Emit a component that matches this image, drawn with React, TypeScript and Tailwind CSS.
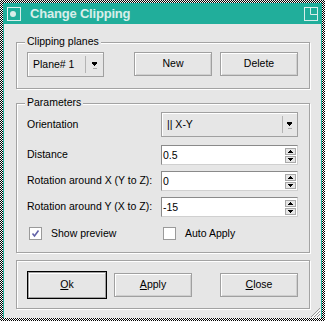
import React from 'react';

const FONT = "font-['Liberation_Sans',Arial,sans-serif]";

function Button({ children }: { children: React.ReactNode }) {
  return (
    <div className="w-[78px] h-[24px] flex items-center justify-center bg-[#e6e6e6] border border-[#a0a0a0] shadow-[inset_1px_1px_0_#ffffff,inset_-1px_-1px_0_#cfcfcf]">
      {children}
    </div>
  );
}

function ComboArrow() {
  return (
    <svg width="6" height="8" viewBox="0 0 6 8" shapeRendering="crispEdges">
      <rect x="0" y="0" width="5" height="2" fill="#000" />
      <rect x="1" y="2" width="3" height="1" fill="#000" />
      <rect x="2" y="3" width="1" height="1" fill="#000" />
      <rect x="0.5" y="6" width="4" height="1" fill="#a8a8a8" />
    </svg>
  );
}

function Combo({ text, width, arrowW }: { text: string; width: string; arrowW: string }) {
  return (
    <div className={`${width} h-[25px] flex bg-[#e6e6e6] border border-[#a0a0a0] shadow-[inset_1px_1px_0_#ffffff]`}>
      <div className="flex-1 flex items-center pl-[5px]">{text}</div>
      <div className="w-px my-[3px] bg-[#b4b4b4]" />
      <div className={`${arrowW} flex items-center justify-center pt-[2px]`}>
        <ComboArrow />
      </div>
    </div>
  );
}

function SpinBtn({ up }: { up?: boolean }) {
  return (
    <div className="w-[11px] h-[7px] flex items-center justify-center bg-[#e6e6e6] border border-[#a8a8a8]">
      <svg width="5" height="3" viewBox="0 0 5 3" shapeRendering="crispEdges">
        {up ? (
          <path d="M2.5 0 L5 3 L0 3 Z" fill="#000" />
        ) : (
          <path d="M0 0 L5 0 L2.5 3 Z" fill="#000" />
        )}
      </svg>
    </div>
  );
}

function Spin({ value }: { value: string }) {
  return (
    <div className="w-[137px] h-[20px] flex items-center bg-white border border-t-[#8a8a8a] border-l-[#8a8a8a] border-r-[#d0d0d0] border-b-[#d0d0d0]">
      <div className="flex-1 pl-[1px] pt-[2px]">{value}</div>
      <div className="flex flex-col gap-px mr-[1px]">
        <SpinBtn up />
        <SpinBtn />
      </div>
    </div>
  );
}

function Group({ label, children, className }: { label?: string; children: React.ReactNode; className: string }) {
  return (
    <div className={`relative border border-[#a3a3a3] shadow-[inset_1px_1px_0_#ffffff,1px_1px_0_#ffffff] ${className}`}>
      {label && (
        <span className="absolute left-[8px] top-[-8px] px-[2px] bg-[#e6e6e6] leading-[13px]">{label}</span>
      )}
      {children}
    </div>
  );
}

function Row({ label, children }: { label: string; children: React.ReactNode }) {
  return (
    <div className="flex items-center">
      <div className="w-[134px]">{label}</div>
      {children}
    </div>
  );
}

function Check({ checked, label }: { checked?: boolean; label: string }) {
  return (
    <div className="flex items-center">
      <div className="w-[13px] h-[13px] bg-white border border-[#9a9a9a] flex items-center justify-center">
        {checked && (
          <svg width="9" height="9" viewBox="0 0 9 9">
            <path d="M1.5 4.5 L3.5 7 L7.5 1.5" stroke="#6262a8" strokeWidth="1.6" fill="none" />
          </svg>
        )}
      </div>
      <span className="ml-[9px]">{label}</span>
    </div>
  );
}

export default function App() {
  return (
    <div className={`${FONT} w-[325px] h-[321px] p-[3px] bg-[repeating-conic-gradient(#000_0_25%,#fff_0_50%)] bg-[length:2px_2px] text-[10.5px] text-black`}>
      <div className="relative w-full h-full flex flex-col border-x border-[#21ae9b] bg-[#e6e6e6]">
        {/* Title bar */}
        <div className="h-[21px] flex items-center bg-[#21ae9b] px-[3px]">
          <svg width="14" height="14" viewBox="0 0 14 14">
            <rect x="0.5" y="0.5" width="13" height="13" fill="none" stroke="#d8eeea" />
            <circle cx="6" cy="7" r="3" fill="#d8eeea" />
          </svg>
          <span className="ml-[9px] text-[13px] font-bold tracking-[-0.2px] text-[#d8eeea] leading-none">Change Clipping</span>
          <div className="flex-1" />
          <svg width="14" height="14" viewBox="0 0 14 14">
            <rect x="0.5" y="0.5" width="13" height="13" fill="none" stroke="#d8eeea" />
            <path d="M6.5 0.5 V7.5 H13.5" fill="none" stroke="#d8eeea" />
          </svg>
        </div>

        {/* Body */}
        <div className="flex flex-col pl-[12px] pr-[11px] pt-[18px]">
          <Group label="Clipping planes" className="pt-[9px] pb-[11px] pl-[10px] pr-[11px]">
            <div className="flex">
              <Combo text="Plane# 1" width="w-[77px]" arrowW="w-[17px]" />
              <div className="ml-[30px]"><Button>New</Button></div>
              <div className="ml-[8px]"><Button>Delete</Button></div>
            </div>
          </Group>

          <Group label="Parameters" className="mt-[14px] pt-[8px] pb-[10px] pl-[10px] pr-[11px]">
            <div className="flex flex-col">
              <Row label="Orientation">
                <Combo text="|| X-Y" width="w-[137px]" arrowW="w-[14px]" />
              </Row>
              <div className="mt-[8px]">
                <Row label="Distance"><Spin value="0.5" /></Row>
              </div>
              <div className="mt-[6px]">
                <Row label="Rotation around X (Y to Z):"><Spin value="0" /></Row>
              </div>
              <div className="mt-[6px]">
                <Row label="Rotation around Y (X to Z):"><Spin value="-15" /></Row>
              </div>
              <div className="mt-[9px] flex pl-[2px]">
                <div className="w-[134px]"><Check checked label="Show preview" /></div>
                <Check label="Auto Apply" />
              </div>
            </div>
          </Group>

          <Group className="mt-[7px] pt-[10px] pb-[9px] pl-[10px] pr-[11px]">
            <div className="flex items-center">
              <div className="w-[80px] h-[28px] border border-black">
                <div className="w-full h-full flex items-center justify-center bg-[#e6e6e6] border border-[#a0a0a0] shadow-[inset_1px_1px_0_#ffffff]">
                  <span><u>O</u>k</span>
                </div>
              </div>
              <div className="ml-[7px]"><Button><span><u>A</u>pply</span></Button></div>
              <div className="ml-[28px]"><Button><span><u>C</u>lose</span></Button></div>
            </div>
          </Group>
        </div>

        {/* Resize grip */}
        <svg className="absolute right-0 bottom-0" width="12" height="12" viewBox="0 0 12 12">
          <path d="M11 2 L2 11 M11 5 L5 11 M11 8 L8 11" stroke="#9a9a9a" strokeWidth="1" />
          <path d="M12 3 L3 12 M12 6 L6 12 M12 9 L9 12" stroke="#ffffff" strokeWidth="1" />
        </svg>
      </div>
    </div>
  );
}
